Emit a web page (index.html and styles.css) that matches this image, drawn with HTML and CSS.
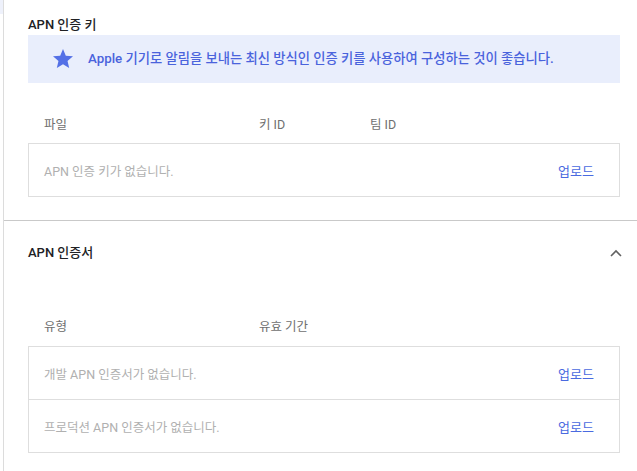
FILE: index.html
```html
<!DOCTYPE html>
<html lang="ko">
<head>
<meta charset="utf-8">
<title>APN</title>
<link rel="stylesheet" href="styles.css">
</head>
<body>
<div class="page">
  <div class="rail"><div class="rail-top"></div></div>
  <div class="card">
    <section class="section first">
      <h2 class="title">APN 인증 키</h2>
      <div class="banner">
        <svg class="star" viewBox="0 0 24 24" width="24" height="24"><path d="M12 17.27L18.18 21l-1.64-7.03L22 9.24l-7.19-.61L12 2 9.19 8.63 2 9.24l5.46 4.73L5.82 21z" fill="currentColor"/></svg>
        <span class="banner-text">Apple 기기로 알림을 보내는 최신 방식인 인증 키를 사용하여 구성하는 것이 좋습니다.</span>
      </div>
      <div class="heads">
        <span class="c1">파일</span>
        <span class="c2">키 ID</span>
        <span class="c3">팀 ID</span>
      </div>
      <div class="box">
        <div class="row">
          <span class="empty">APN 인증 키가 없습니다.</span>
          <span class="upload">업로드</span>
        </div>
      </div>
    </section>
    <section class="section second">
      <div class="title-row">
        <h2 class="title">APN 인증서</h2>
        <svg class="chev" viewBox="0 0 12 8" width="12" height="8"><path d="M1 7 L6 2 L11 7" fill="none" stroke="currentColor" stroke-width="1.6"/></svg>
      </div>
      <div class="heads heads2">
        <span class="c1">유형</span>
        <span class="c2">유효 기간</span>
      </div>
      <div class="box">
        <div class="row">
          <span class="empty">개발 APN 인증서가 없습니다.</span>
          <span class="upload">업로드</span>
        </div>
        <div class="row">
          <span class="empty">프로덕션 APN 인증서가 없습니다.</span>
          <span class="upload">업로드</span>
        </div>
      </div>
    </section>
  </div>
</div>
</body>
</html>
```
FILE: styles.css
```css
html, body {
  margin: 0;
  padding: 0;
  background: #ffffff;
}
body {
  font-family: Roboto, "Noto Sans CJK KR", sans-serif;
  color: #212121;
  width: 637px;
  height: 471px;
  overflow: hidden;
}
.page {
  display: flex;
  height: 471px;
}
.rail {
  width: 3px;
  flex: none;
}
.rail-top {
  height: 14px;
  background: #eef1fb;
}
.card {
  flex: 1;
  border-left: 1px solid #dcdcdc;
  min-width: 0;
}
.section {
  padding: 0 17px 0 24px;
}
.section.first {
  padding-top: 15px;
  padding-bottom: 23px;
  border-bottom: 1px solid #c9c9c9;
}
.section.second {
  padding-top: 22px;
}
.title {
  margin: 0;
  font-size: 13px;
  font-weight: 500;
  line-height: 20px;
  color: #202124;
}
.banner {
  display: flex;
  align-items: center;
  height: 48px;
  background: #e9eefc;
  padding-left: 23px;
  gap: 13px;
  color: #4a63dc;
}
.star {
  flex: none;
  display: block;
  color: #5470e6;
}
.banner-text {
  font-size: 13.3px;
  font-weight: 500;
  line-height: 20px;
  white-space: nowrap;
}
.heads {
  display: flex;
  margin-top: 32px;
  margin-bottom: 8px;
  padding-left: 16px;
  font-size: 12.5px;
  line-height: 20px;
  color: #6f6f6f;
}
.heads2 {
  margin-top: 54px;
  margin-bottom: 9px;
}
.c1 { width: 215px; }
.c2 { width: 111px; }
.box {
  border: 1px solid #dedede;
}
.row {
  display: flex;
  align-items: center;
  justify-content: space-between;
  height: 52px;
  padding: 0 25px 0 15px;
}
.row + .row {
  border-top: 1px solid #dedede;
}
.empty {
  font-size: 12.5px;
  color: #b0b0b0;
}
.upload {
  font-size: 13px;
  color: #4a6ae0;
}
.title-row {
  display: flex;
  align-items: center;
  justify-content: space-between;
}
.chev {
  display: block;
  color: #616161;
  margin-right: -2px;
}
```
